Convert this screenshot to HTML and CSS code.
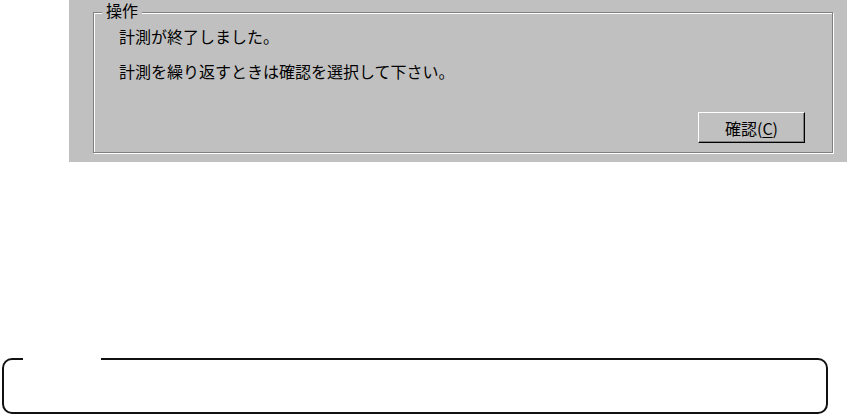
FILE: index.html
```html
<!DOCTYPE html>
<html lang="ja">
<head>
<meta charset="utf-8">
<title>操作</title>
<link rel="stylesheet" href="styles.css">
</head>
<body>
<div class="panel">
  <div class="group">
    <span class="group-label">操作</span>
    <p class="msg">計測が終了しました。</p>
    <p class="msg msg-second">計測を繰り返すときは確認を選択して下さい。</p>
    <div class="actions">
      <button class="btn" type="button">確認(<u>C</u>)</button>
    </div>
  </div>
</div>
<div class="note">
  <span class="note-gap"></span>
</div>
</body>
</html>
```

FILE: styles.css
```css
html, body {
  margin: 0;
  padding: 0;
  background: #fff;
}

body {
  width: 847px;
  height: 415px;
  overflow: hidden;
  font-family: "Noto Sans CJK JP", "Noto Sans", sans-serif;
  color: #000;
}

.panel {
  margin-left: 69px;
  height: 162px;
  background: #c0c0c0;
  padding-top: 12px;
  padding-left: 24px;
  box-sizing: border-box;
}

.group {
  position: relative;
  box-sizing: border-box;
  width: 740px;
  height: 141px;
  border: 1px solid #808080;
  box-shadow: inset 1px 1px 0 #fff, 1px 1px 0 #fff;
  padding: 13px 27px 0 25px;
  display: flex;
  flex-direction: column;
}

.group-label {
  position: absolute;
  left: 8px;
  top: -12px;
  padding: 0 4px;
  background: #c0c0c0;
  font-size: 16px;
  line-height: 19px;
}

.msg {
  margin: 0;
  font-size: 16px;
  line-height: 20px;
  white-space: nowrap;
}

.msg-second {
  margin-top: 15px;
}

.actions {
  display: flex;
  justify-content: flex-end;
  margin-top: 31px;
}

.btn {
  width: 107px;
  height: 31px;
  box-sizing: border-box;
  margin: 0;
  padding: 0;
  background: #c0c0c0;
  border: 1px solid;
  border-color: #fff #000 #000 #fff;
  box-shadow: inset -1px -1px 0 #808080;
  font-family: "Noto Sans CJK JP", "Noto Sans", sans-serif;
  font-size: 16px;
  line-height: 20px;
  color: #000;
  display: flex;
  align-items: center;
  justify-content: center;
}

.btn u {
  text-decoration: underline;
  text-underline-offset: 2px;
}

.note {
  position: relative;
  box-sizing: border-box;
  margin-top: 196px;
  margin-left: 2px;
  width: 826px;
  height: 56px;
  border: 2px solid #111;
  border-radius: 10px;
}

.note-gap {
  position: absolute;
  left: 19px;
  top: -3px;
  width: 78px;
  height: 4px;
  background: #fff;
}
```
